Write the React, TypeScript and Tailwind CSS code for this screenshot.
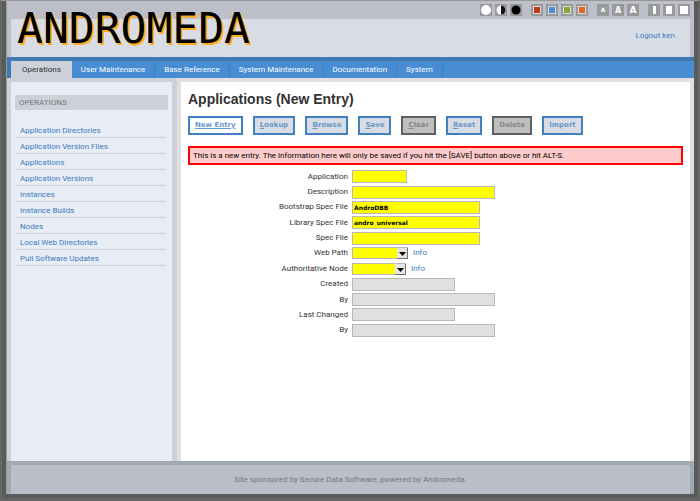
import { useState } from "react";
import type { ReactNode } from "react";

const tabs = [
  "Operations",
  "User Maintenance",
  "Base Reference",
  "System Maintenance",
  "Documentation",
  "System",
];

const pages = [
  "Application Directories",
  "Application Version Files",
  "Applications",
  "Application Versions",
  "Instances",
  "Instance Builds",
  "Nodes",
  "Local Web Directories",
  "Pull Software Updates",
];

type Action = { label: string; kind: "current" | "normal" | "off"; hotkey?: boolean };

const actions: Action[] = [
  { label: "New Entry", kind: "current" },
  { label: "Lookup", kind: "normal", hotkey: true },
  { label: "Browse", kind: "normal", hotkey: true },
  { label: "Save", kind: "normal", hotkey: true },
  { label: "Clear", kind: "off", hotkey: true },
  { label: "Reset", kind: "normal", hotkey: true },
  { label: "Delete", kind: "off" },
  { label: "Import", kind: "normal" },
];

const actionStyle = {
  current: "border-[#4080c0] bg-white text-[#6799cb] underline",
  normal: "border-[#4080c0] bg-[#d8dce4] text-[#6799cb]",
  off: "border-[#606060] bg-[#bfbfbf] text-[#888888]",
};

type Field = {
  id: string;
  label: string;
  width: string;
  kind: "text" | "select" | "readonly";
  value?: string;
};

const fields: Field[] = [
  { id: "application", label: "Application", width: "w-[55px]", kind: "text" },
  { id: "description", label: "Description", width: "w-[143px]", kind: "text" },
  { id: "bootstrap", label: "Bootstrap Spec File", width: "w-[128px]", kind: "text", value: "AndroDBB" },
  { id: "library", label: "Library Spec File", width: "w-[128px]", kind: "text", value: "andro_universal" },
  { id: "spec", label: "Spec File", width: "w-[128px]", kind: "text" },
  { id: "webpath", label: "Web Path", width: "w-[56px]", kind: "select" },
  { id: "node", label: "Authoritative Node", width: "w-[54px]", kind: "select" },
  { id: "created", label: "Created", width: "w-[103px]", kind: "readonly" },
  { id: "createdby", label: "By", width: "w-[143px]", kind: "readonly" },
  { id: "changed", label: "Last Changed", width: "w-[103px]", kind: "readonly" },
  { id: "changedby", label: "By", width: "w-[143px]", kind: "readonly" },
];

function ToolButton({ name, children }: { name: string; children: ReactNode }) {
  return (
    <button type="button" aria-label={name} className="size-3 bg-[#98999e]">
      <svg viewBox="0 0 12 12" className="size-3">
        {children}
      </svg>
    </button>
  );
}

function Swatch({ name, fill }: { name: string; fill: string }) {
  return (
    <ToolButton name={name}>
      <rect x="2" y="2" width="8" height="8" fill="#e4ddd6" />
      <rect x="3" y="3" width="6" height="6" fill={fill} />
    </ToolButton>
  );
}

function SizeLetter({ name, size }: { name: string; size: number }) {
  return (
    <ToolButton name={name}>
      <text
        x="6"
        y={6 + size * 0.36}
        textAnchor="middle"
        fontSize={size}
        fontWeight="bold"
        fontFamily="DejaVu Sans, sans-serif"
        fill="#fff"
      >
        A
      </text>
    </ToolButton>
  );
}

function Toolbar() {
  return (
    <div className="flex justify-end gap-[9px] pt-[3px] pr-1">
      <div className="flex gap-[3px]">
        <ToolButton name="Light">
          <circle cx="6" cy="6" r="5" fill="#fff" />
        </ToolButton>
        <ToolButton name="Contrast">
          <circle cx="6" cy="6" r="4.5" fill="#fff" />
          <path d="M6 1.5a4.5 4.5 0 0 1 0 9z" fill="#111" />
        </ToolButton>
        <ToolButton name="Dark">
          <circle cx="6" cy="6" r="4.5" fill="#000" />
        </ToolButton>
      </div>
      <div className="flex gap-[3px]">
        <Swatch name="Red" fill="#b83c1c" />
        <Swatch name="Blue" fill="#488cd4" />
        <Swatch name="Green" fill="#84a832" />
        <Swatch name="Orange" fill="#dc6828" />
      </div>
      <div className="flex gap-[3px]">
        <SizeLetter name="Small text" size={6} />
        <SizeLetter name="Medium text" size={8} />
        <SizeLetter name="Large text" size={9} />
      </div>
      <div className="flex gap-[3px]">
        <ToolButton name="Narrow">
          <rect x="5" y="2" width="3" height="8" fill="#fff" />
        </ToolButton>
        <ToolButton name="Medium">
          <rect x="3" y="2" width="6" height="8" fill="#fff" />
        </ToolButton>
        <ToolButton name="Wide">
          <rect x="2" y="2" width="8" height="8" fill="#fff" />
        </ToolButton>
      </div>
    </div>
  );
}

function Control({ field, focused }: { field: Field; focused: boolean }) {
  const [value, setValue] = useState(field.value ?? "");
  if (field.kind === "select") {
    return (
      <div className="flex items-center gap-[5px]">
        <div className={`relative h-3 ${field.width}`}>
          <select
            id={field.id}
            className="block h-3 w-full appearance-none border border-[#b8b8b8] bg-[#ffff00]"
          />
          <svg
            viewBox="0 0 11 11"
            className="pointer-events-none absolute top-px right-0 size-[11px]"
          >
            <rect width="11" height="11" fill="#707070" />
            <rect width="10" height="10" fill="#e6e6e6" />
            <path d="M2 4h7L5.500 8z" fill="#000" />
          </svg>
        </div>
        <a href="#info" className="text-[#3b7bbd]">
          Info
        </a>
      </div>
    );
  }
  const fill = field.kind === "text" ? "bg-[#ffff00]" : "bg-[#e0e0e0]";
  return (
    <input
      id={field.id}
      type="text"
      value={value}
      autoFocus={focused}
      readOnly={field.kind === "readonly"}
      onChange={(e) => setValue(e.target.value)}
      className={`h-[13px] border border-[#b8b8b8] px-px font-['DejaVu_Sans',sans-serif] text-[6px] leading-[11px] font-bold text-black outline-none ${field.width} ${fill}`}
    />
  );
}

export default function App() {
  return (
    <div className="flex min-h-screen flex-col border-x-2 border-t border-b-3 border-[#666666] border-t-[#999999] bg-[#5a5c5a] px-1 pb-1 font-[Roboto,'Liberation_Sans',sans-serif] text-[8px] leading-[10px] text-[#333333]">
      <div className="flex flex-1 flex-col border-l border-[#999999]">
        <header className="bg-[#bcbfc8]">
          <div className="flex h-14 flex-col">
            <Toolbar />
            <div className="mx-1 mt-[3px] flex flex-1 items-center justify-between bg-[#d8dce4] pr-[15px] pl-[6px]">
              <h1 className="-mt-5 font-['DejaVu_Sans_Mono',monospace] text-[43px] leading-none text-black [text-shadow:2px_2px_0_#ffae18]">
                ANDROMEDA
              </h1>
              <a href="#logout" className="-mt-1 text-[#3b7bbd]">
                Logout ken
              </a>
            </div>
          </div>
          <nav className="flex border-t-4 border-l-4 border-[#3f7ab5] bg-[#488cd4]">
            {tabs.map((tab, i) => (
              <a
                key={tab}
                href="#tab"
                className={
                  i === 0
                    ? "bg-[#cdd0d8] px-[11px] pt-1 pb-[3px] text-[#333333]"
                    : "border-r border-[#3f7fc4] px-[9px] pt-1 pb-[3px] text-white"
                }
              >
                {tab}
              </a>
            ))}
          </nav>
        </header>

        <div className="flex flex-1">
          <aside className="flex w-[170px] flex-none flex-col border-t-4 border-r-5 border-l-4 border-[#cdd0d8] bg-[#e8ecf5] px-1 pt-[13px]">
            <h2 className="bg-[#cdd0d8] px-1 pt-[3px] pb-[2px] text-[#777777]">OPERATIONS</h2>
            <ul className="mt-3 px-[2px]">
              {pages.map((page) => (
                <li key={page} className="border-b border-[#cdd0d8] px-[3px] pt-1 pb-px">
                  <a href="#page" className="text-[#3b7bbd]">
                    {page}
                  </a>
                </li>
              ))}
            </ul>
          </aside>

          <main className="flex-1 border-x-4 border-t-4 border-[#e0e0e0] bg-white px-[7px] pt-[9px]">
            <h1 className="font-['Liberation_Sans',Arial,sans-serif] text-[14px] leading-4 font-bold text-[#333333]">
              Applications (New Entry)
            </h1>
            <div className="mt-[9px] flex gap-[10px]">
              {actions.map((a) => (
                <button
                  key={a.label}
                  type="button"
                  disabled={a.kind === "off"}
                  className={`h-[19px] border-2 px-[5px] font-['DejaVu_Sans',sans-serif] text-[7px] leading-[15px] font-bold ${actionStyle[a.kind]}`}
                >
                  {a.hotkey ? (
                    <>
                      <span className="underline">{a.label[0]}</span>
                      {a.label.slice(1)}
                    </>
                  ) : (
                    a.label
                  )}
                </button>
              ))}
            </div>
            <p className="mt-[11px] border-2 border-[#ff0000] bg-[#ffcccc] px-[3px] pt-[3px] pb-[2px] text-black">
              This is a new entry. The information here will only be saved if you hit the [SAVE]
              button above or hit ALT-S.
            </p>
            <form className="mt-1 grid h-[169px] auto-rows-fr">
              {fields.map((f, i) => (
                <div key={f.id} className="flex items-center gap-1">
                  <label htmlFor={f.id} className="w-[160px] text-right">
                    {f.label}
                  </label>
                  <Control field={f} focused={i === 0} />
                </div>
              ))}
            </form>
          </main>
        </div>

        <footer className="border-x-4 border-t-4 border-[#a2a8af] bg-[#b9bec8] pt-[10px] pb-[9px] text-center text-[#777777]">
          Site sponsored by Secure Data Software, powered by Andromeda.
        </footer>
      </div>
    </div>
  );
}
